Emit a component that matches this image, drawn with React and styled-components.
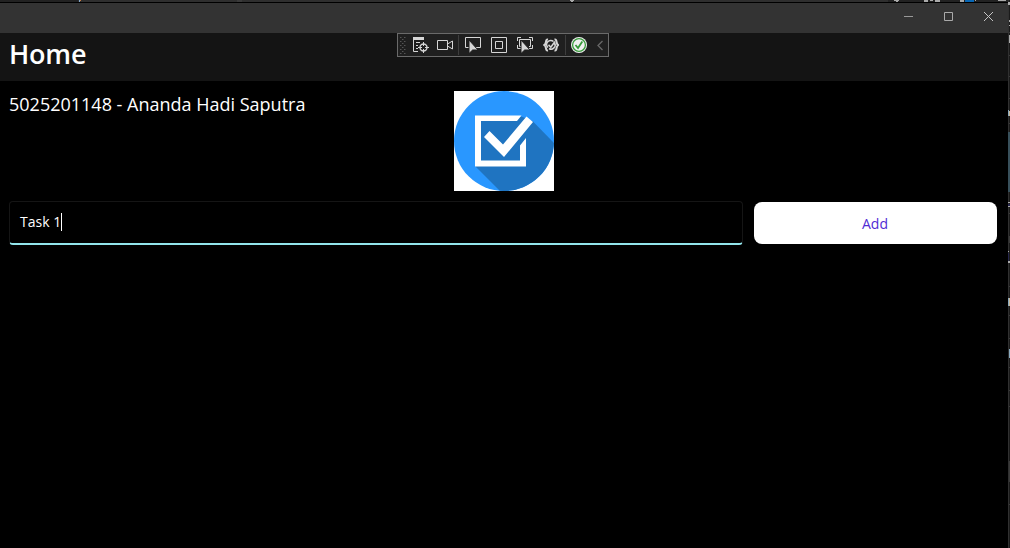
import React, { useState } from 'react';
import styled, { createGlobalStyle } from 'styled-components';

const GlobalStyle = createGlobalStyle`
  * { box-sizing: border-box; }
  html, body { margin: 0; background: #1c1c1c; overflow: hidden; }
  body { font-family: "Open Sans", "Noto Sans", sans-serif; color: #fff; }
`;

const Desktop = styled.div`
  display: grid;
  grid-template-columns: 1008px 2px;
  height: 548px;
`;

const Main = styled.div`
  display: flex;
  flex-direction: column;
  min-width: 0;
`;

const BackStrip = styled.svg`
  display: block;
  height: 2px;
  flex: none;
`;

const SideStrip = styled.svg`
  display: block;
`;

const Window = styled.div`
  position: relative;
  flex: 1;
  display: flex;
  flex-direction: column;
  background: #000;
  border-top: 1px solid #000;
`;

const TitleBar = styled.header`
  height: 30px;
  background: #333;
  display: flex;
  justify-content: flex-end;
`;

const CaptionButton = styled.button`
  width: 40px;
  height: 27px;
  padding: 0;
  border: 0;
  background: none;
  display: flex;
  align-items: center;
  justify-content: center;
  svg { display: block; }
`;

const NavBar = styled.nav`
  height: 48px;
  background: #141414;
  padding-left: 9px;
`;

const PageTitle = styled.h1`
  margin: 0;
  font-size: 27px;
  font-weight: 600;
  line-height: 41px;
  letter-spacing: -0.2px;
`;

const Page = styled.main`
  padding: 10px 11px 0 9px;
  display: grid;
  grid-template-columns: 734px 243px;
  column-gap: 11px;
  row-gap: 10px;
`;

const Intro = styled.section`
  grid-column: 1 / -1;
  height: 100px;
  display: grid;
  grid-template-columns: 445px 100px;
`;

const Student = styled.p`
  margin: 0;
  font-size: 18px;
  line-height: 26px;
  white-space: nowrap;
`;

const Entry = styled.label`
  height: 44px;
  border: 1px solid #151515;
  border-bottom: 2px solid #92e5eb;
  border-radius: 4px;
  padding: 0 10px 2px;
  display: flex;
  align-items: center;
  font-size: 14px;
  line-height: 20px;
`;

const Caret = styled.span`
  width: 1px;
  height: 18px;
  background: #fff;
`;

const AddButton = styled.button`
  height: 42px;
  margin-top: 1px;
  padding: 2px 1px 0 0;
  border: 0;
  border-radius: 8px;
  background: #fff;
  color: #512bd4;
  font: 14px/20px "Open Sans", "Noto Sans", sans-serif;
`;

/* Floats over the window's top edge */
const DebugBar = styled.div`
  position: absolute;
  top: 30px;
  left: 397px;
  width: 212px;
  height: 24px;
  padding-left: 2px;
  background: #1f1f1f;
  border: 1px solid #6a6a6a;
  display: flex;
  align-items: center;
`;

const Tool = styled.svg`
  display: block;
  flex: none;
  margin-left: ${(p) => p.$gap}px;
`;

const Separator = styled.span`
  width: 1px;
  height: 20px;
  background: #3d3d3d;
  margin-left: ${(p) => p.$gap}px;
`;

const INK = '#d6d6d6';
const BAR = '#1f1f1f';

function Icon({ gap, width = 16, children }) {
  return (
    <Tool $gap={gap} width={width} height="16" viewBox={`0 0 ${width} 16`} fill="none" stroke={INK}>
      {children}
    </Tool>
  );
}

function Grip() {
  const dots = [];
  for (let y = 0; y < 9; y++) {
    for (let x = 0; x < 2; x++) {
      dots.push(<rect key={`${x}-${y}`} x={x * 4 + (y % 2 ? 2 : 0)} y={y * 2} width={x && y % 2 ? 0 : 1.5} height="1" />);
    }
  }
  return <Tool $gap={0} width="6" height="17" fill="#555">{dots}</Tool>;
}

const Pointer = () => <path d="M4 3v13.500l3.600-3.500H13z" fill={INK} stroke={BAR} strokeWidth="1" />;

function Toolbar() {
  return (
    <DebugBar>
      <Grip />
      <Icon gap={7}>
        <path d="M0 0h11v3H0z" fill={INK} stroke="none" />
        <path d="M.5 2v12.500H5M3 5.500h4M3 8.500h2M3 11.500h2" />
        <circle cx="10.500" cy="10.500" r="3.500" strokeWidth="1.400" />
        <path d="M10.500 5v4M10.500 12v4M5 10.500h4M12 10.500h4" />
      </Icon>
      <Icon gap={8}>
        <path d="M.5 3.500h10v9H.5zM10.500 7l5-3v8l-5-3" />
      </Icon>
      <Separator $gap={5} />
      <Icon gap={6}>
        <path d="M4 10.500H.5v-10h15v10H11" />
        <Pointer />
      </Icon>
      <Icon gap={10}>
        <path d="M.5.500h15v15H.5zM4.500 4.500h7v7h-7z" />
      </Icon>
      <Icon gap={10}>
        <path d="M.5 4V.500H4M12 .500h3.500V4M.5 8v3.500H4M12 11.500h3.500V8M4 9.500H2.500V2.500H13.500V9.500H12" />
        <Pointer />
      </Icon>
      <Icon gap={10}>
        <path d="M5 2.500C2 2 4 6.500 1.300 8 4 9.500 2 14 5 13.500M11.500 2.500C14.500 2 12.500 6.500 15.200 8 12.500 9.500 14.500 14 11.500 13.500" strokeWidth="2" />
        <path d="M10.500 4.500A4 4 0 0 0 5 10.500M6 11.500A4 4 0 0 0 11.500 6M5.500 7.800l2.300 2.400L12 4.500" strokeWidth="1.600" />
      </Icon>
      <Separator $gap={6} />
      <Icon gap={5}>
        <circle cx="8" cy="8" r="8" fill="#f1f1f1" stroke="none" />
        <circle cx="8" cy="8" r="6.400" fill="#f1f1f1" stroke="#379a3b" strokeWidth="1.300" />
        <path d="M4.500 8l2.500 3 4.300-6.500" stroke="#379a3b" strokeWidth="1.800" />
      </Icon>
      <Icon gap={9} width={8}>
        <path d="M6.500 4L2 8.500 6.500 13" stroke="#686868" strokeWidth="1.300" />
      </Icon>
    </DebugBar>
  );
}

function Logo() {
  return (
    <svg width="100" height="100" viewBox="0 0 100 100">
      <defs><clipPath id="disc"><circle cx="50" cy="50" r="50" /></clipPath></defs>
      <path d="M0 0h100v100H0z" fill="#fff" />
      <g clipPath="url(#disc)">
        <path d="M0 0h100v100H0z" fill="#2997ff" />
        <path d="M21 75L66 25l12.500 5L104 56v48H50z" fill="#1f74c1" />
        <path d="M24 27h45v45H24z" fill="#1f74c1" />
      </g>
      <path d="M21 24.500h46.500L63 30H27v39.500h39V54.500l6-7.500v28.500H21z" fill="#fff" />
      <path d="M30 46l5.500-6L49 53.500 72.500 25.500l6.500 5.500L50 66z" fill="#fff" />
    </svg>
  );
}

export default function App() {
  const [task] = useState('Task 1');
  return (
    <>
      <GlobalStyle />
      <Desktop>
        <Main>
          <BackStrip width="1008" height="2">
            <path d="M0 0h1008v2H0z" fill="#2f2f2f" />
            <path d="M0 0h78v2H0zM888 0h120v2H888z" fill="#222" />
            <path d="M79 0h1v2h-1z" fill="#81a5c8" />
            <path d="M80 0h1v1h-1z" fill="#c87a43" />
            <path d="M237 0h5v2h-5z" fill="#3a3a3a" />
            <path d="M570 0h4v1h-1v1h-2V1h-1zM894 0h5v1h-1v1h-2V1h-2zM924 0h4v2h-4zM930 0h3v1h-3zM935 0h5v2h-5zM960 0h4v2h-4zM975 0h1v1h-1zM998 0h8v1h-8z" fill="#aaa" />
            <path d="M965 0h9v2h-9z" fill="#0867b5" />
          </BackStrip>
          <Window>
            <TitleBar>
              <CaptionButton aria-label="Minimize">
                <svg width="10" height="10" stroke="#999"><path d="M1 4.500h9" /></svg>
              </CaptionButton>
              <CaptionButton aria-label="Maximize">
                <svg width="10" height="10" fill="none" stroke="#aaa"><path d="M1.500.500h8v8h-8z" /></svg>
              </CaptionButton>
              <CaptionButton aria-label="Close">
                <svg width="10" height="10" stroke="#c4c4c4"><path d="M1 0l9 9M10 0l-9 9" /></svg>
              </CaptionButton>
            </TitleBar>
            <NavBar><PageTitle>Home</PageTitle></NavBar>
            <Page>
              <Intro>
                <Student>5025201148 - Ananda Hadi Saputra</Student>
                <Logo />
              </Intro>
              <Entry>{task}<Caret /></Entry>
              <AddButton>Add</AddButton>
            </Page>
            <Toolbar />
          </Window>
        </Main>
        <SideStrip width="2" height="548">
          <path d="M0 0h1v548H0z" fill="#303030" />
          <path d="M1 0h1v548H1z" fill="#1b1b1b" />
          <path d="M1 32h1v1H1zM1 55h1v1H1zM1 76h1v1H1zM1 98h1v1H1zM1 123h1v1H1zM1 213h1v1H1zM1 236h1v7H1zM1 286h1v1H1zM1 315h1v1H1zM1 338h1v1H1zM1 367h1v1H1zM1 390h1v1H1zM1 406h1v1H1zM1 461h1v21H1zM1 504h1v1H1z" fill="#3a3a3a" />
          <path d="M0 2h2v3H0zM1 20h1v2H1zM1 25h1v1H1zM1 35h1v8H1zM0 202h2v1H0zM0 206h2v1H0zM0 251h1v1H0zM0 261h2v2H0z" fill="#aaa" />
          <path d="M0 132h2v60H0z" fill="#38505b" />
          <path d="M0 110h1v6H0zM0 298h1v8H0zM1 349h1v9H1z" fill="#89a9bd" />
          <path d="M1 111h1v5H1zM1 298h1v8H1z" fill="#c9b89b" />
          <path d="M0 204h2v2H0zM0 253h1v8H0z" fill="#26264d" />
        </SideStrip>
      </Desktop>
    </>
  );
}
